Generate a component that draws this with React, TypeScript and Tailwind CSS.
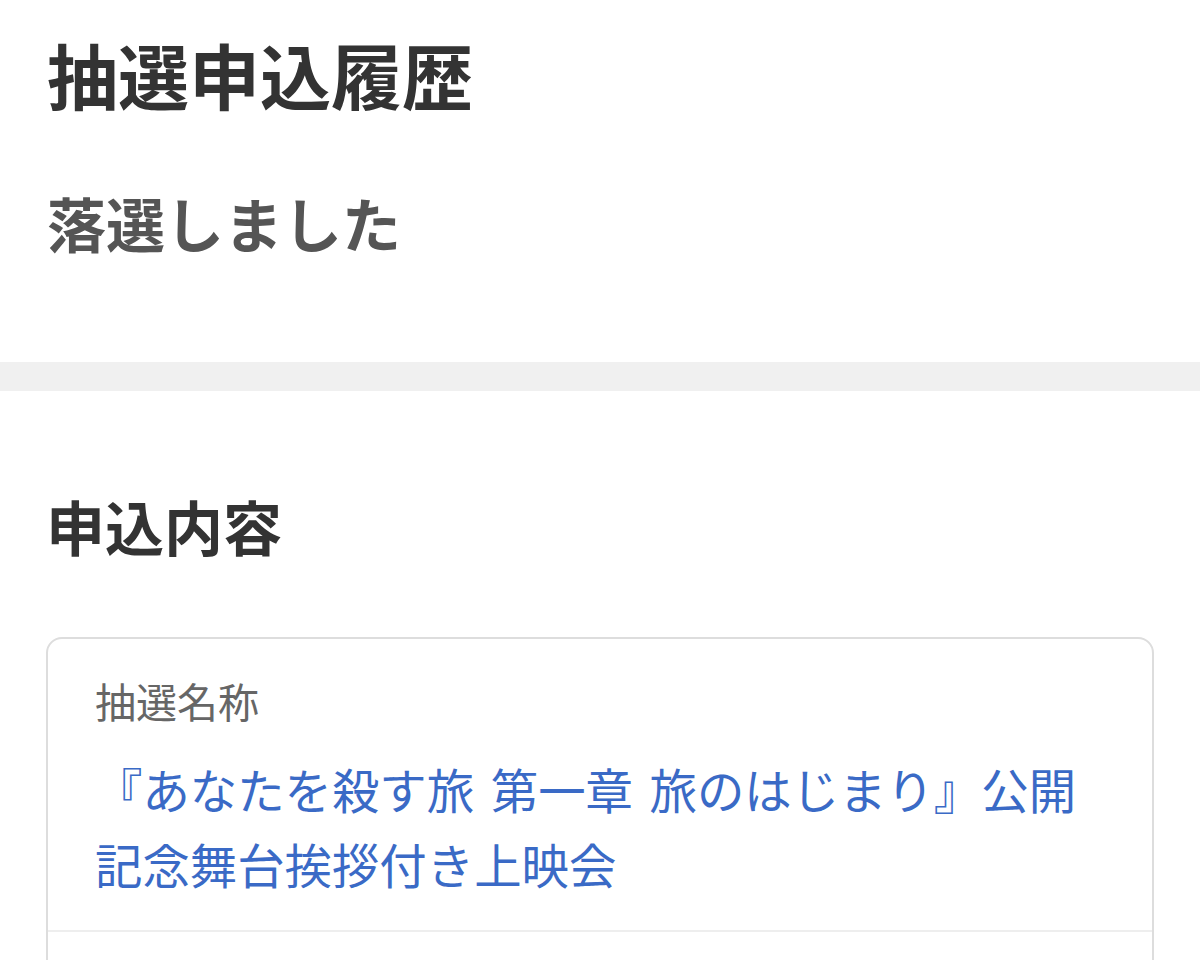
import React from "react";

export default function App() {
  return (
    <div
      className="w-[1200px] h-[960px] overflow-hidden bg-white"
      style={{ fontFamily: '"Noto Sans CJK JP", "Noto Sans", sans-serif' }}
    >
      <section className="px-[47px] pt-[38px] pb-[110px]">
        <h1 className="text-[71px] leading-none font-bold text-[#333333]">抽選申込履歴</h1>
        <p className="mt-[84px] text-[59px] leading-none font-bold text-[#555555]">落選しました</p>
      </section>
      <div className="h-[29px] bg-[#f0f0f0]" />
      <section className="px-[46px] pt-[105px]">
        <h2 className="text-[59px] leading-none font-bold text-[#333333]">申込内容</h2>
        <div className="mt-[82px] rounded-[16px] border-2 border-[#dddddd]">
          <div className="px-[47px] pt-[41px] pb-[29px] border-b-2 border-[#eeeeee]">
            <div className="text-[41px] leading-none text-[#666666]">抽選名称</div>
            <div className="mt-[30px] text-[47.4px] leading-[75px] text-[#3a6ac6] [word-spacing:6px]">
              『あなたを殺す旅 第一章 旅のはじまり』公開
              <br />
              記念舞台挨拶付き上映会
            </div>
          </div>
          <div className="h-[120px]" />
        </div>
      </section>
    </div>
  );
}
